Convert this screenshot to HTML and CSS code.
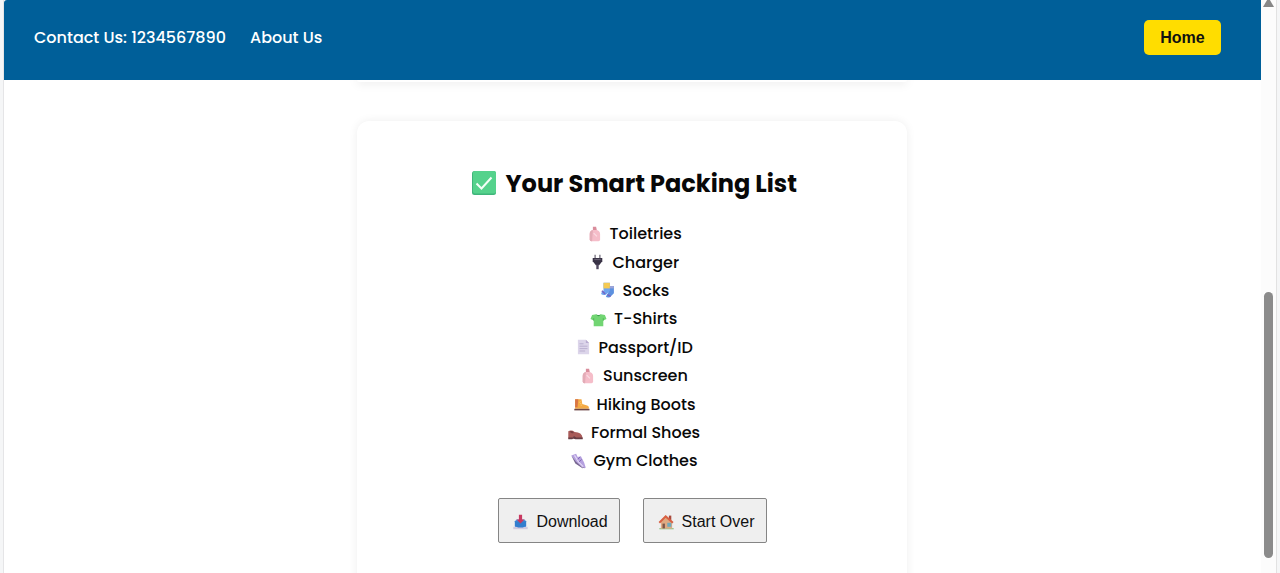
FILE: index.html
```html
<!DOCTYPE html>
<html lang="en">
<head>
<meta charset="utf-8">
<title>Your Smart Packing List</title>
<link rel="stylesheet" href="styles.css">
</head>
<body>
<svg class="defs" width="0" height="0" aria-hidden="true">
  <symbol id="bottle" viewBox="0 0 20 20"><path d="M8 1h4l1 5H8z" fill="#d98d9c"/><path d="M8 5h5c3 1 4 3 4 5v7q0 2-2 2H6q-2 0-2-2v-7c0-3 1-4 4-5z" fill="#f5bdc9"/><path d="M8 5c-3 1-4 2-4 5v7q0 2 2 2h1z" fill="#e3acb7"/><path d="M9 9l4 4" stroke="#fbdde4" stroke-width="1.5"/></symbol>
  <symbol id="plug" viewBox="0 0 20 20"><path d="M7 1v5M13 1v5" stroke="#6b6575" stroke-width="1.5"/><path d="M4 5h12v4l-4 5H8L4 9z" fill="#393346"/><path d="M8.5 13h3v6h-3z" fill="#514960"/><path d="M6 7h8" stroke="#777083"/></symbol>
  <symbol id="socks" viewBox="0 0 20 20"><path d="M11 5h7v9l-5 5q-4 1-5-1l3-5z" fill="#5d91df"/><path d="M5 1h8v10l-5 5q-4 1-6-1 0-2 3-4z" fill="#6fa4ee"/><path d="M5 1h8v7H5z" fill="#f5ca52"/><path d="M3 11l4 4M10 16l4 2" stroke="#7765c2" stroke-width="2"/><path d="M13 5h5v3h-5z" fill="#9ba4d8"/></symbol>
  <symbol id="shirt" viewBox="0 0 20 20"><path d="M7 4q3 3 6 0l5 1 2 5-4 2v7H4v-7l-4-2 2-5z" fill="#72d573"/><path d="M7 4q3 5 6 0l-2 1H9z" fill="#389f46"/><path d="M4 9v3M16 9v3" stroke="#48af52"/></symbol>
  <symbol id="page" viewBox="0 0 20 20"><path d="M3 1h10l4 4v14H3z" fill="#dcd5ea"/><path d="M13 1v4h4z" fill="#b9acd1"/><path d="M5 6h5M5 9h10M5 12h10M5 15h7" stroke="#b3a7c9"/></symbol>
  <symbol id="boot" viewBox="0 0 20 20"><path d="M2 4h8l1 6 6 2q3 1 2 4H2z" fill="#f4aa45"/><path d="M2 4h4l-1 10H2z" fill="#d87545"/><path d="M1 16h19v2H1z" fill="#6d4544"/><path d="M9 7l-2 1M10 9l-2 1M11 11l-2 1" stroke="#ffd17a"/></symbol>
  <symbol id="shoe" viewBox="0 0 20 20"><path d="M1 9q4-2 8 1 9 0 10 8H1z" fill="#a95b59"/><path d="M1 17h6l1-2 3 2h8v2h-9l-3-1-1 1H1z" fill="#663d45"/><path d="M3 9q4-1 5 2-4 2-5-2z" fill="#7b4045"/></symbol>
  <symbol id="sneaker" viewBox="0 0 20 20"><path d="M1 3l6-2 2 4 4-1 4 8 2 6q-1 2-4 0L7 12z" fill="#b5a0df"/><path d="M1 3l6 8 8 7 3 0-3 1-9-6z" fill="#75658e"/><path d="M5 3l5 8 6 6" fill="none" stroke="#e3d8f5" stroke-width="1.5"/><path d="M9 8l3-3M11 11l3-3" stroke="#7458a8"/></symbol>
  <symbol id="inbox" viewBox="0 0 20 20"><path d="M3 9l2-2h10l2 2v8H3z" fill="#4b91dc"/><path d="M1 16h18v3H1z" fill="#d0c9df"/><path d="M3 9h14v6l-4 2H7l-4-2z" fill="#327dce"/><path d="M8 1h4v6h3l-5 5-5-5h3z" fill="#c93860"/></symbol>
  <symbol id="house" viewBox="0 0 20 20"><path d="M1 18h18v1H1z" fill="#68a951"/><path d="M3 8l6-6 8 8v8H3z" fill="#dfaa82"/><path d="M13 2h3v6h-3z" fill="#a94a3d"/><path d="M1 11l8-8 9 8" fill="none" stroke="#d86143" stroke-width="2.5"/><path d="M5 12h3v6H5z" fill="#7b5649"/><path d="M11 11h5v5h-5z" fill="#6faabb"/></symbol>
  <symbol id="check" viewBox="0 0 26 26"><rect x="1" y="1" width="24" height="24" rx="2.5" fill="#3fb57a"/><rect x="2" y="1" width="23" height="22.5" rx="2" fill="#55d28c"/><path d="M5.5 13.5l5 5 10-11" fill="none" stroke="#f4fff8" stroke-width="2"/></symbol>
</svg>
<div class="window">
  <div class="page">
    <header class="navbar">
      <nav class="links"><a class="contact">Contact Us: 1234567890</a><a class="about">About Us</a></nav>
      <a class="home">Home</a>
    </header>
    <main class="content">
      <div class="previous-card"></div>
      <section class="card">
        <h1 class="title"><svg class="check"><use href="#check"/></svg><span>Your Smart Packing List</span></h1>
        <ul class="list">
          <li><svg class="icon"><use href="#bottle"/></svg><span class="toiletries">Toiletries</span></li>
          <li><svg class="icon"><use href="#plug"/></svg><span class="charger">Charger</span></li>
          <li><svg class="icon"><use href="#socks"/></svg><span class="socks">Socks</span></li>
          <li><svg class="icon"><use href="#shirt"/></svg><span class="shirts">T-Shirts</span></li>
          <li><svg class="icon"><use href="#page"/></svg><span class="passport">Passport/ID</span></li>
          <li><svg class="icon"><use href="#bottle"/></svg><span class="sunscreen">Sunscreen</span></li>
          <li><svg class="icon"><use href="#boot"/></svg><span class="boots">Hiking Boots</span></li>
          <li><svg class="icon"><use href="#shoe"/></svg><span class="formal">Formal Shoes</span></li>
          <li><svg class="icon"><use href="#sneaker"/></svg><span class="gym">Gym Clothes</span></li>
        </ul>
        <div class="actions">
          <button class="button download"><svg class="icon"><use href="#inbox"/></svg>Download</button>
          <button class="button restart"><svg class="icon"><use href="#house"/></svg>Start Over</button>
        </div>
      </section>
    </main>
  </div>
  <div class="scrollbar"><div class="arrow"></div><div class="thumb"></div></div>
</div>
</body>
</html>
```
FILE: styles.css
```css
* { box-sizing: border-box; }
body { margin: 0; height: 573px; overflow: hidden; background: #f5f6f7; font-family: Poppins, Inter, sans-serif; color: #080808; }
.defs { position: absolute; }
.window { display: flex; height: 573px; margin: 0 3px; background: #fff; border-left: 1px solid #e5e5e7; border-right: 1px solid #e2e2e2; }
.page { width: 1257px; overflow: hidden; }
.navbar { position: relative; z-index: 1; display: flex; justify-content: space-between; align-items: center; height: 80px; padding: 0 40px 5px 30px; background: #005f99; border-top-left-radius: 3px; }
.links { display: flex; gap: 24px; color: #fff; font-size: 16px; font-weight: 500; white-space: nowrap; }
.contact { width: 192px; }
.about { width: 73px; }
.home { width: 77px; height: 35px; border-radius: 5px; background: #fd0; color: #111; font: 700 16px/35px "Liberation Sans", sans-serif; text-align: center; }
.content { display: flex; flex-direction: column; align-items: center; padding-right: 1px; }
.previous-card { width: 550px; height: 2px; border-radius: 0 0 12px 12px; box-shadow: 0 0 10px #00000040; }
.card { width: 550px; height: 500px; margin-top: 39px; padding-top: 44px; border-radius: 12px; background: #fff; box-shadow: 0 0 10px #00000012; }
.title { display: flex; justify-content: center; align-items: center; gap: 9px; height: 37px; margin: 0 0 17px 3px; font-size: 24px; font-weight: 700; white-space: nowrap; }
.title span { width: 291px; }
.check { width: 26px; height: 26px; margin-top: -1px; }
.list { margin: 0; padding: 0 0 0 3px; list-style: none; font-size: 16px; font-weight: 500; }
.list li { display: flex; justify-content: center; align-items: center; gap: 6px; height: 28.4px; padding-top: 1px; white-space: nowrap; }
.icon { width: 19px; height: 16px; flex: none; }
.toiletries { width: 73px; }
.charger { width: 67px; }
.socks { width: 47px; }
.shirts { width: 64px; }
.passport { width: 95px; }
.sunscreen { width: 86px; }
.boots { width: 99px; }
.formal { width: 110px; }
.gym { width: 105px; }
.actions { display: flex; justify-content: center; gap: 23px; margin: 23px 0 0 1px; }
.button { display: flex; align-items: center; justify-content: center; gap: 6px; height: 45px; padding: 3px 0 0 1px; border: 1px solid #858585; border-radius: 2px; background: #efefef; color: #111; font: 16px "Liberation Sans", sans-serif; white-space: nowrap; }
.download { width: 122px; }
.restart { width: 124px; }
.scrollbar { width: 15px; padding: 0 3px; background: #fcfcfc; }
.arrow { height: 7px; margin: 0 -1px 0 -1px; background: #878787; clip-path: polygon(50% -35%, 100% 100%, 0 100%); }
.thumb { width: 9px; height: 266px; margin-top: 285px; border-radius: 5px; background: #8b8b8b; }
```
